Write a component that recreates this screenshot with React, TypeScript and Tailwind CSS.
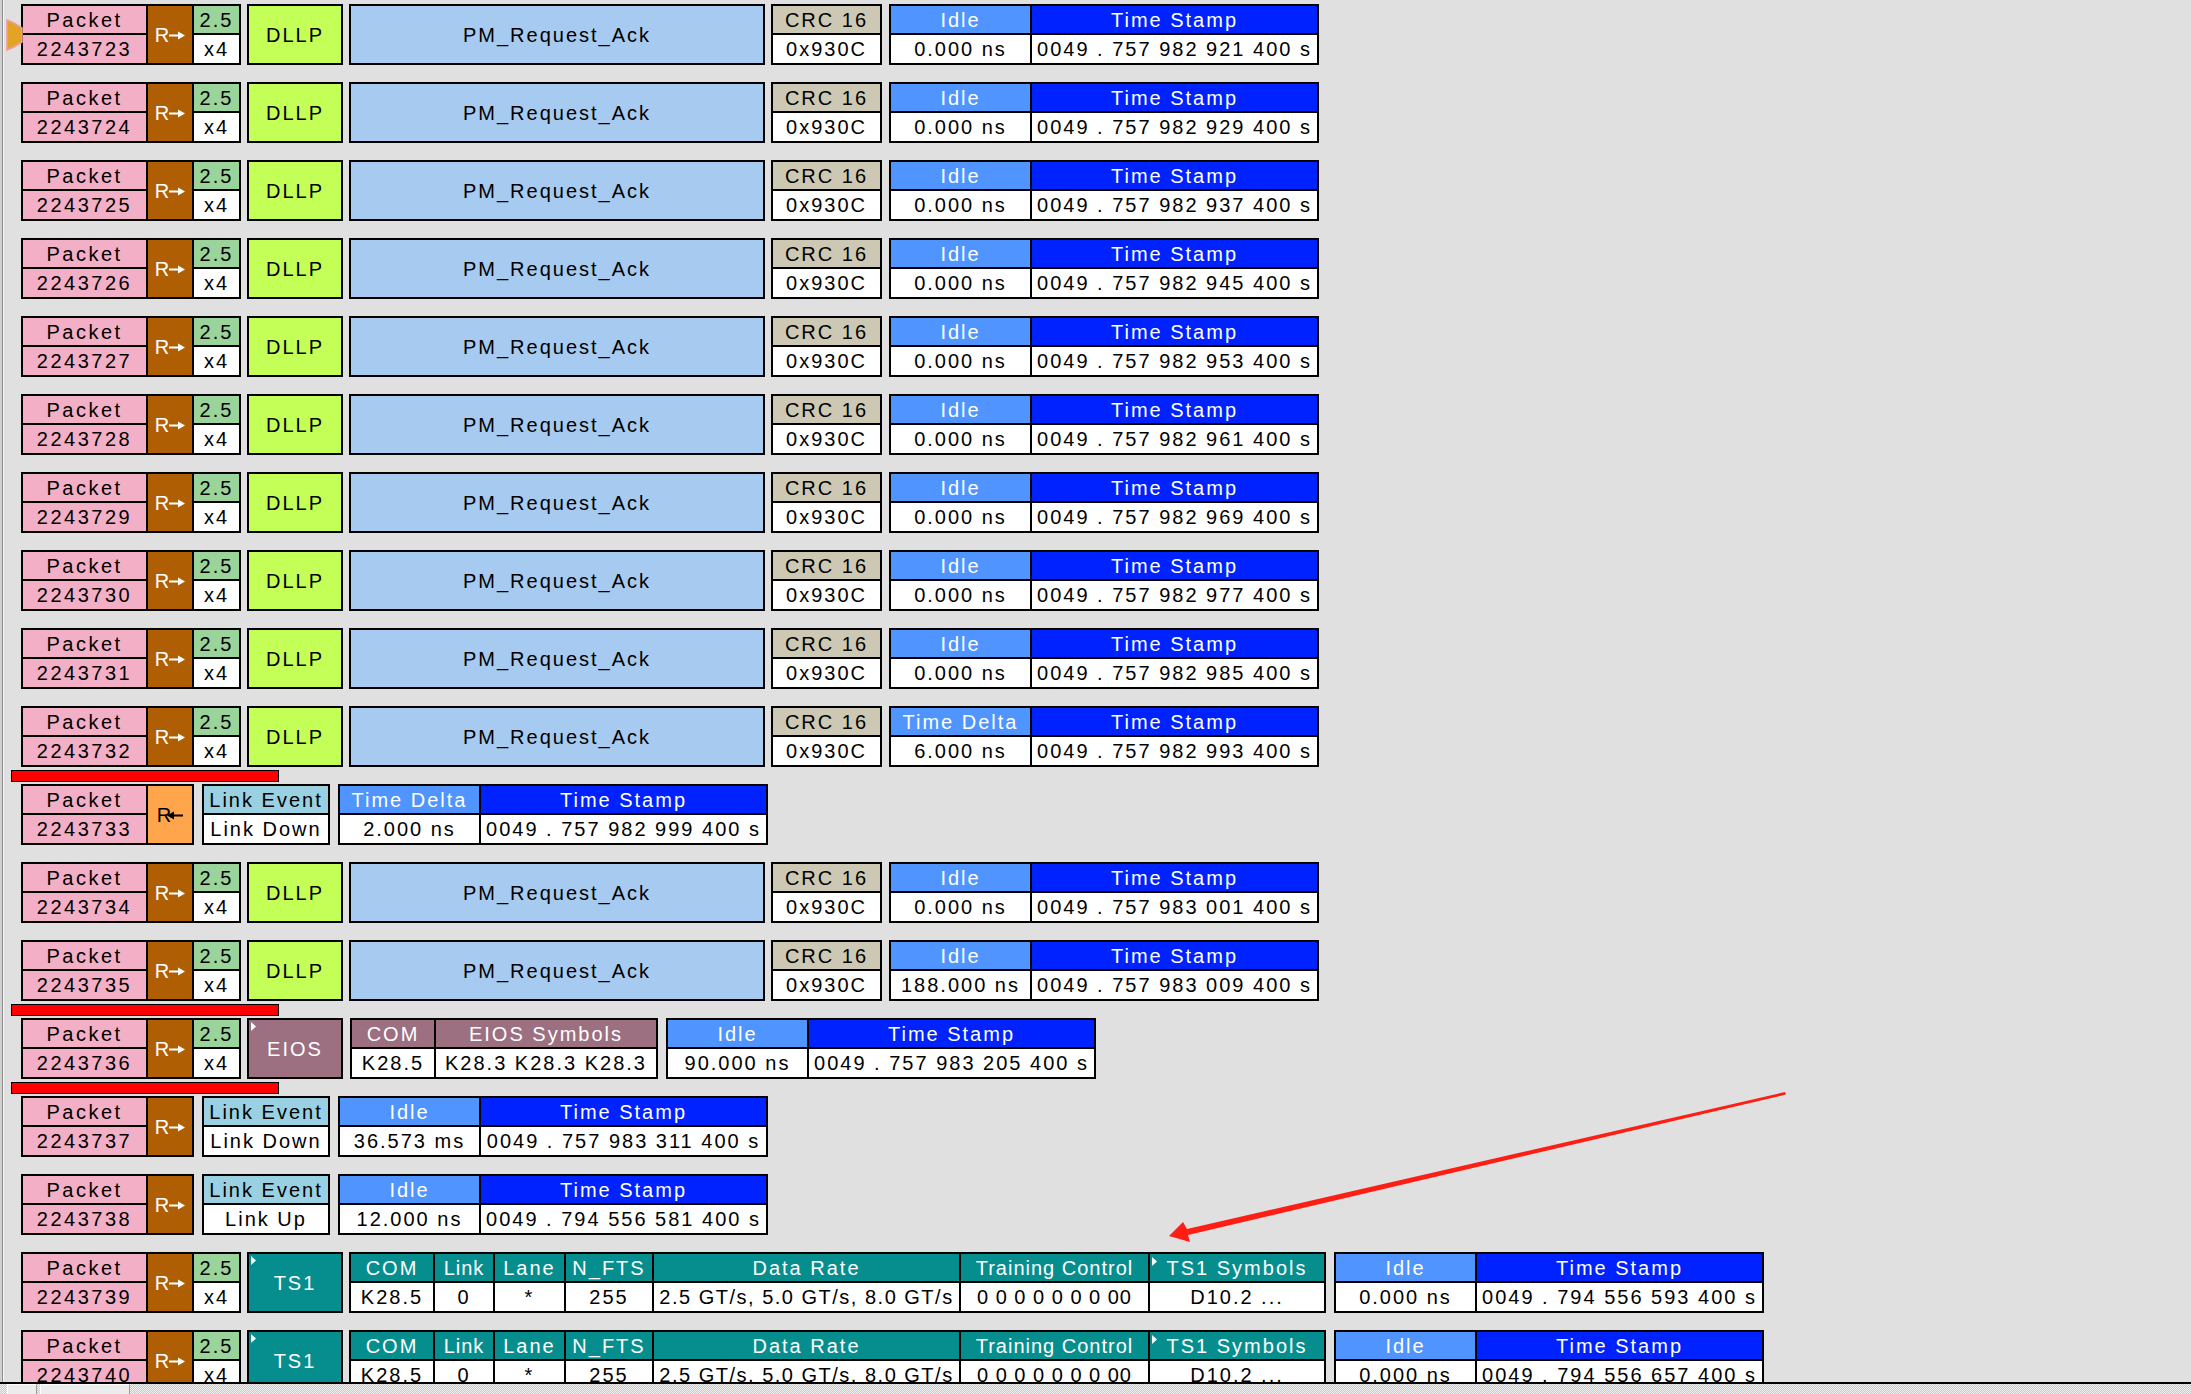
import React from 'react'

type ColProps = {
  w: string
  head: React.ReactNode
  body: React.ReactNode
  hc?: string
  bc?: string
  mark?: boolean
}

function Mark({ className = '' }: { className?: string }) {
  return (
    <svg width="5" height="10" viewBox="0 0 5 10" className={className}>
      <polygon points="0,0 5,4.5 0,9" fill="#ffffff" />
    </svg>
  )
}

function ArrowRight() {
  return (
    <svg width="16" height="9" viewBox="0 0 16 9" className="mt-[1px]">
      <line x1="0" y1="4.5" x2="10" y2="4.5" stroke="currentColor" strokeWidth="2" />
      <polygon points="9,0.5 16,4.5 9,8.5" fill="currentColor" />
    </svg>
  )
}

function ArrowLeft() {
  return (
    <svg width="16" height="9" viewBox="0 0 16 9" className="-ml-[4px] mt-[1px]">
      <line x1="6" y1="4.5" x2="16" y2="4.5" stroke="currentColor" strokeWidth="2" />
      <polygon points="7,0.5 0,4.5 7,8.5" fill="currentColor" />
    </svg>
  )
}

// one column of a packet field: coloured header over a white value
function Col({ w, head, body, hc = 'bg-white', bc = 'bg-white', mark }: ColProps) {
  return (
    <div className={`flex flex-col gap-[2px] ${w}`}>
      <div className={`relative flex h-[27px] items-center justify-center whitespace-nowrap ${hc}`}>
        {mark && <Mark className="absolute left-[2px] top-[3px]" />}
        {head}
      </div>
      <div className={`flex flex-1 items-center justify-center whitespace-nowrap ${bc}`}>{body}</div>
    </div>
  )
}

function Box({ className = '', children }: { className?: string; children: React.ReactNode }) {
  return <div className={`flex h-[61px] shrink-0 gap-[2px] bg-black p-[2px] ${className}`}>{children}</div>
}

function Solid({ className = '', children, mark }: { className?: string; children: React.ReactNode; mark?: boolean }) {
  return (
    <div className={`relative flex h-[61px] shrink-0 items-center justify-center border-2 border-black ${className}`}>
      {mark && <Mark className="absolute left-[2px] top-[2px]" />}
      {children}
    </div>
  )
}

function PacketBox({ id, dir = 'out', rate = true }: { id: string; dir?: 'out' | 'in'; rate?: boolean }) {
  return (
    <Box>
      <Col w="w-[123px]" head="Packet" body={id} hc="bg-[#F2AFC5] tracking-[2.5px]" bc="bg-[#F2AFC5] tracking-[2.5px]" />
      {dir === 'out' ? (
        <div className="flex w-[44px] items-center justify-center bg-[#B05E04] text-white tracking-normal">
          <span>R</span>
          <ArrowRight />
        </div>
      ) : (
        <div className="flex w-[44px] items-center justify-center bg-[#FFA64D] text-black tracking-normal">
          <span>R</span>
          <ArrowLeft />
        </div>
      )}
      {rate && <Col w="w-[45px]" head="2.5" body="x4" hc="bg-[#9AD49A]" />}
    </Box>
  )
}

function IdleBox({ label = 'Idle', idle, ts, className }: { label?: string; idle: string; ts: string; className: string }) {
  return (
    <Box className={className}>
      <Col w="w-[139px]" head={label} body={idle} hc="bg-[#4F94FF] text-white" />
      <Col w="w-[285px]" head="Time Stamp" body={ts} hc="bg-[#0022FF] text-white" />
    </Box>
  )
}

function DllpRow({ id, label, idle, ts }: { id: string; label?: string; idle: string; ts: string }) {
  return (
    <>
      <PacketBox id={id} />
      <Solid className="ml-[6px] w-[96px] bg-[#C3FF57]">DLLP</Solid>
      <Solid className="ml-[6px] w-[416px] bg-[#A6CAF0]">PM_Request_Ack</Solid>
      <Box className="ml-[6px]">
        <Col w="w-[107px]" head="CRC 16" body="0x930C" hc="bg-[#CCC8B4]" />
      </Box>
      <IdleBox className="ml-[7px]" label={label} idle={idle} ts={ts} />
    </>
  )
}

function LinkRow({ id, dir, event, label, idle, ts }: { id: string; dir: 'out' | 'in'; event: string; label?: string; idle: string; ts: string }) {
  return (
    <>
      <PacketBox id={id} dir={dir} rate={false} />
      <Box className="ml-[8px]">
        <Col w="w-[124px]" head="Link Event" body={event} hc="bg-[#99D1E3]" />
      </Box>
      <IdleBox className="ml-[8px]" label={label} idle={idle} ts={ts} />
    </>
  )
}

function EiosRow() {
  return (
    <>
      <PacketBox id="2243736" />
      <Solid className="ml-[6px] w-[96px] bg-[#9C7080] text-white" mark>EIOS</Solid>
      <Box className="ml-[7px]">
        <Col w="w-[82px]" head="COM" body="K28.5" hc="bg-[#9C7080] text-white" />
        <Col w="w-[220px]" head="EIOS Symbols" body="K28.3 K28.3 K28.3" hc="bg-[#9C7080] text-white" />
      </Box>
      <IdleBox className="ml-[8px]" idle="90.000 ns" ts="0049 . 757 983 205 400 s" />
    </>
  )
}

function Ts1Row({ id, ts }: { id: string; ts: string }) {
  const teal = 'bg-[#068E8E] text-white'
  return (
    <>
      <PacketBox id={id} />
      <Solid className="ml-[6px] w-[96px] bg-[#068E8E] text-white" mark>TS1</Solid>
      <Box className="ml-[6px]">
        <Col w="w-[82px]" head="COM" body="K28.5" hc={teal} />
        <Col w="w-[58px]" head="Link" body="0" hc={`${teal} tracking-[1px]`} />
        <Col w="w-[69px]" head="Lane" body="*" hc={teal} />
        <Col w="w-[86px]" head="N_FTS" body="255" hc={teal} />
        <Col w="w-[305px]" head="Data Rate" body="2.5 GT/s, 5.0 GT/s, 8.0 GT/s" hc={teal} bc="bg-white tracking-[1.5px]" />
        <Col w="w-[187px]" head="Training Control" body="0 0 0 0 0 0 0 00" hc={`${teal} tracking-[1px]`} bc="bg-white tracking-[1px]" />
        <Col w="w-[174px]" head="TS1 Symbols" body="D10.2 ..." hc={teal} mark />
      </Box>
      <IdleBox className="ml-[8px]" idle="0.000 ns" ts={ts} />
    </>
  )
}

const dllp = ['921', '929', '937', '945', '953', '961', '969', '977', '985']

const rows: { node: React.ReactNode; bar?: boolean }[] = [
  ...dllp.map((t, i) => ({
    node: <DllpRow id={String(2243723 + i)} idle="0.000 ns" ts={`0049 . 757 982 ${t} 400 s`} />,
  })),
  { node: <DllpRow id="2243732" label="Time Delta" idle="6.000 ns" ts="0049 . 757 982 993 400 s" />, bar: true },
  { node: <LinkRow id="2243733" dir="in" event="Link Down" label="Time Delta" idle="2.000 ns" ts="0049 . 757 982 999 400 s" /> },
  { node: <DllpRow id="2243734" idle="0.000 ns" ts="0049 . 757 983 001 400 s" /> },
  { node: <DllpRow id="2243735" idle="188.000 ns" ts="0049 . 757 983 009 400 s" />, bar: true },
  { node: <EiosRow />, bar: true },
  { node: <LinkRow id="2243737" dir="out" event="Link Down" idle="36.573 ms" ts="0049 . 757 983 311 400 s" /> },
  { node: <LinkRow id="2243738" dir="out" event="Link Up" idle="12.000 ns" ts="0049 . 794 556 581 400 s" /> },
  { node: <Ts1Row id="2243739" ts="0049 . 794 556 593 400 s" /> },
  { node: <Ts1Row id="2243740" ts="0049 . 794 556 657 400 s" /> },
]

export default function App() {
  return (
    <div className="relative flex h-[1394px] w-[2191px] flex-col overflow-hidden bg-[#E0E0E0] font-['Liberation_Sans',Arial,sans-serif] text-[20px] leading-none tracking-[2px] text-black">
      <div className="flex min-h-0 flex-1 overflow-hidden">
        {/* window edge */}
        <div className="flex w-[4px] shrink-0">
          <div className="w-[2px] bg-[#d0d0d0]" />
          <div className="w-[1px] bg-[#8c8c8c]" />
          <div className="w-[1px] bg-[#f5f5f5]" />
        </div>

        <div className="flex flex-col pt-[4px]">
          {rows.map((r, i) => (
            <React.Fragment key={i}>
              <div className="flex pl-[17px]">{r.node}</div>
              <div className="h-[17px] shrink-0 pl-[7px] pt-[3px]">
                {r.bar && <div className="h-[12px] w-[268px] border border-black bg-[#FF0000]" />}
              </div>
            </React.Fragment>
          ))}
        </div>
      </div>

      {/* horizontal scrollbar */}
      <div className="h-[2px] shrink-0 bg-black" />
      <div className="flex h-[10px] shrink-0 gap-[3px] bg-[repeating-conic-gradient(#c6c6c6_0_25%,#f4f4f4_0_50%)] bg-[length:2px_2px] pl-[7px]">
        <div className="w-[30px] border-l border-t border-r border-l-white border-t-white border-r-[#9a9a9a] bg-[#ececec]" />
        <div className="w-[90px] border-l border-t border-r border-l-white border-t-white border-r-[#9a9a9a] bg-[#ececec]" />
      </div>

      {/* current packet marker */}
      <svg width="18" height="33" viewBox="0 0 18 33" className="absolute left-[6px] top-[19px]">
        <polygon points="1,1 8,4 16,9 16,23 8,28 1,31" fill="#E3A324" stroke="#F19BA5" strokeWidth="1.5" />
      </svg>

      {/* red annotation arrow */}
      <svg width="2191" height="1394" viewBox="0 0 2191 1394" className="pointer-events-none absolute left-0 top-0">
        <polygon
          points="1785,1092 1786,1094.5 1188,1235 1190,1242 1169,1236 1183,1222 1187,1229"
          fill="#FF1E14"
        />
      </svg>
    </div>
  )
}
